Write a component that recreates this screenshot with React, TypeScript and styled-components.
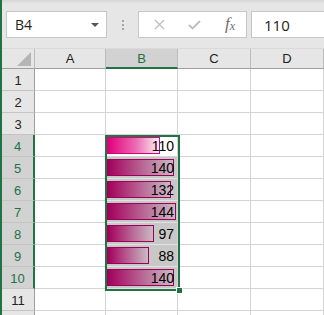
import styled, { createGlobalStyle } from "styled-components";

const GREEN = "#217346";
const values = [110, 140, 132, 144, 97, 88, 140];
const columns = ["A", "B", "C", "D"];
// row 12 only peeks in at the bottom edge, so its number is not drawn
const rows = Array.from({ length: 12 }, (_, i) => i + 1);

const Global = createGlobalStyle`
  html, body { margin: 0; padding: 0; background: #fff; overflow: hidden; }
  * { box-sizing: border-box; }
`;

export default function App() {
  return (
    <Window>
      <Global />
      <FormulaBar>
        <NameBox>
          <span>B4</span>
          <Caret />
        </NameBox>
        <Grip>
          <Dot />
          <Dot />
          <Dot />
        </Grip>
        <FxButtons>
          <svg width="11" height="11" viewBox="0 0 11 11">
            <path d="M1 1L10 10M10 1L1 10" stroke="#bdbdbd" strokeWidth="1.3" fill="none" />
          </svg>
          <svg width="13" height="10" viewBox="0 0 13 10">
            <path d="M1 5L4.5 8.5L12 1" stroke="#bdbdbd" strokeWidth="1.8" fill="none" />
          </svg>
          <Fx>
            f<sub>x</sub>
          </Fx>
        </FxButtons>
        <FormulaInput>110</FormulaInput>
      </FormulaBar>

      <Sheet>
        <Corner>
          <svg width="14" height="14" viewBox="0 0 14 14">
            <path d="M14 0L14 14L0 14Z" fill="#b5b5b5" />
          </svg>
        </Corner>
        {columns.map((c) => (
          <ColHead key={c} $active={c === "B"}>
            {c}
          </ColHead>
        ))}
        {rows.map((r) => {
          const inSel = r >= 4 && r <= 10;
          const v = inSel ? values[r - 4] : null;
          return [
            <RowHead key={`h${r}`} $active={inSel}>
              {r < 12 ? r : ""}
            </RowHead>,
            ...columns.map((c) =>
              c === "B" && v !== null ? (
                <Cell key={`${c}${r}`} $dim={r !== 4}>
                  <Bar $dim={r !== 4} style={{ width: Math.round(v * 0.482) }} />
                  <Num>{v}</Num>
                </Cell>
              ) : (
                <Cell key={`${c}${r}`} />
              )
            ),
          ];
        })}
        <Selection>
          <Handle />
        </Selection>
      </Sheet>
    </Window>
  );
}

const Window = styled.div`
  width: 324px;
  height: 315px;
  border-left: 2px solid ${GREEN};
  background: #fff;
  overflow: hidden;
  font-family: "Open Sans", "Noto Sans", sans-serif;
`;

const FormulaBar = styled.div`
  height: 49px;
  display: flex;
  align-items: flex-start;
  padding: 11px 0 0 4px;
  background: linear-gradient(#d6d6d6 0, #e6e6e6 4px, #e6e6e6 100%);
  border-bottom: 1px solid #dadada;
`;

const Box = styled.div`
  height: 27px;
  background: #fff;
  border: 1px solid #c6c6c6;
  display: flex;
  align-items: center;
`;

const NameBox = styled(Box)`
  width: 101px;
  justify-content: space-between;
  padding: 0 7px 0 8px;
  font-size: 14px;
  color: #222;
`;

const Caret = styled.span`
  width: 0;
  height: 0;
  border-left: 4px solid transparent;
  border-right: 4px solid transparent;
  border-top: 4px solid #555;
`;

const Grip = styled.div`
  width: 31px;
  height: 27px;
  display: flex;
  flex-direction: column;
  align-items: center;
  justify-content: center;
  gap: 2px;
`;

const Dot = styled.span`
  width: 2px;
  height: 2px;
  background: #a6a6a6;
`;

const FxButtons = styled(Box)`
  width: 109px;
  justify-content: space-between;
  padding: 0 11px 0 15px;
`;

const Fx = styled.span`
  font-family: "Liberation Serif", serif;
  font-style: italic;
  font-size: 17px;
  line-height: 17px;
  color: #6e6e6e;
  sub {
    font-size: 12px;
    vertical-align: -1px;
  }
`;

const FormulaInput = styled(Box)`
  flex: 1;
  margin-left: 4px;
  border-right: none;
  padding-left: 12px;
  font-size: 15px;
  color: #222;
`;

const Sheet = styled.div`
  position: relative;
  display: grid;
  grid-template-columns: 33px 71px 72px 73px 73px;
  grid-template-rows: 20px;
  grid-auto-rows: 22px;
  font-family: "Liberation Sans", Arial, sans-serif;
`;

const Corner = styled.div`
  background: #e6e6e6;
  border-right: 1px solid #bcbcbc;
  border-bottom: 1px solid #9f9f9f;
  display: flex;
  align-items: flex-end;
  justify-content: flex-end;
  padding: 0 3px 2px 0;
`;

const ColHead = styled.div<{ $active?: boolean }>`
  display: flex;
  align-items: center;
  justify-content: center;
  font-size: 13px;
  background: ${(p) => (p.$active ? "#d2d2d2" : "#e6e6e6")};
  color: ${(p) => (p.$active ? GREEN : "#222")};
  border-right: 1px solid #bcbcbc;
  border-bottom: ${(p) => (p.$active ? `2px solid ${GREEN}` : "1px solid #9f9f9f")};
`;

const RowHead = styled.div<{ $active?: boolean }>`
  display: flex;
  align-items: center;
  justify-content: center;
  padding-top: 1px;
  font-size: 13px;
  background: ${(p) => (p.$active ? "#d2d2d2" : "#e6e6e6")};
  color: ${(p) => (p.$active ? GREEN : "#222")};
  border-bottom: 1px solid #c4c4c4;
  border-right: ${(p) => (p.$active ? `2px solid ${GREEN}` : "1px solid #9f9f9f")};
`;

const Cell = styled.div<{ $dim?: boolean }>`
  position: relative;
  display: flex;
  align-items: flex-end;
  justify-content: flex-end;
  padding: 0 3px 3px 0;
  background: ${(p) => (p.$dim ? "#c8c8c8" : "#fff")};
  border-right: 1px solid #d4d4d4;
  border-bottom: 1px solid ${(p) => (p.$dim ? "#e2e2e2" : "#d4d4d4")};
`;

const Bar = styled.div<{ $dim?: boolean }>`
  position: absolute;
  left: 1px;
  top: 2px;
  height: 17px;
  background: ${(p) =>
    p.$dim
      ? "linear-gradient(to right, #a3005b, #b96a98 55%, #cbbac4)"
      : "linear-gradient(to right, #e2007c, #ec6cb2 55%, #fdf0f7)"};
  border: 1px solid ${(p) => (p.$dim ? "#9c0058" : "#d8007d")};
`;

const Num = styled.span`
  position: relative;
  font-size: 14px;
  line-height: 14px;
  color: #000;
`;

const Selection = styled.div`
  position: absolute;
  left: 103px;
  top: 86px;
  width: 75px;
  height: 156px;
  border: 2px solid ${GREEN};
  pointer-events: none;
`;

const Handle = styled.div`
  position: absolute;
  right: -5px;
  bottom: -5px;
  width: 7px;
  height: 7px;
  background: ${GREEN};
  border: 1px solid #fff;
`;
